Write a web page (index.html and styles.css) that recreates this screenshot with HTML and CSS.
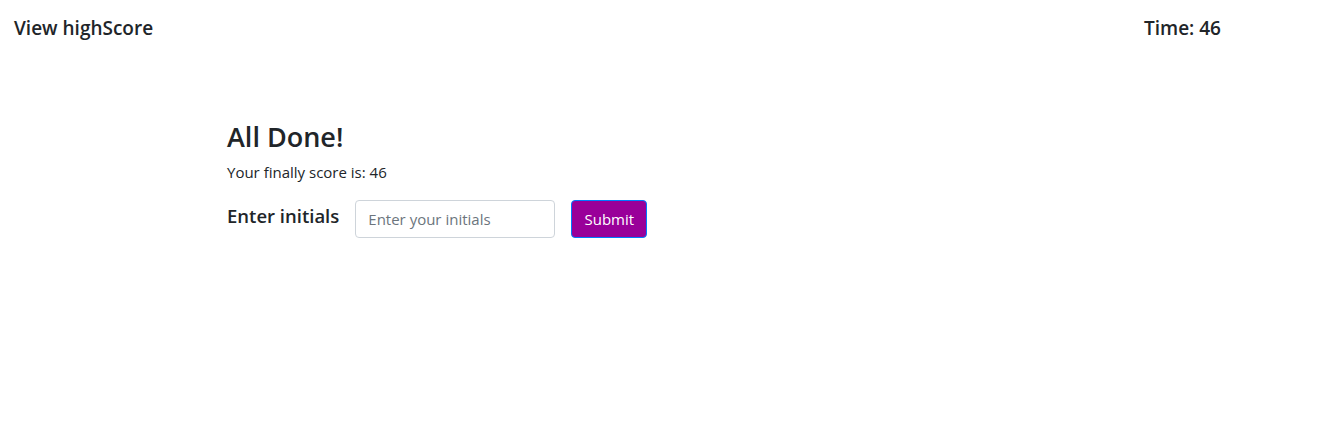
FILE: index.html
```html
<!DOCTYPE html>
<html lang="en">
<head>
<meta charset="utf-8">
<title>Quiz</title>
<link rel="stylesheet" href="styles.css">
</head>
<body>
  <header class="topbar">
    <h5 class="topbar-link">View highScore</h5>
    <h5 class="topbar-time">Time: 46</h5>
  </header>
  <main class="done">
    <h3 class="done-title">All Done!</h3>
    <p class="done-score">Your finally score is: 46</p>
    <form class="done-form">
      <h5 class="done-label">Enter initials</h5>
      <input class="done-input" type="text" placeholder="Enter your initials">
      <button class="done-btn" type="button">Submit</button>
    </form>
  </main>
</body>
</html>
```
FILE: styles.css
```css
html, body {
  margin: 0;
  padding: 0;
  background: #fff;
}
body {
  font-family: "Open Sans", "Noto Sans", sans-serif;
  color: #212529;
  font-size: 16px;
  line-height: 1.5;
}
h3, h5, p { margin: 0; }

.topbar {
  display: flex;
  justify-content: space-between;
  padding: 16px 0 0 14px;
  height: 40px;
}
.topbar h5 {
  font-size: 19px;
  font-weight: 600;
  line-height: 24px;
}
.topbar-time {
  width: 195px;
}

.done {
  padding: 64px 0 0 227px;
}
.done-title {
  font-size: 27px;
  font-weight: 600;
  line-height: 34px;
  margin-bottom: 6px;
}
.done-score {
  font-size: 15px;
  line-height: 24px;
  margin-bottom: 16px;
}
.done-form {
  display: flex;
  align-items: flex-start;
}
.done-label {
  font-size: 18.5px;
  font-weight: 600;
  line-height: 24px;
  margin-top: 4px;
  margin-right: 16px;
}
.done-input {
  box-sizing: border-box;
  width: 200px;
  height: 38px;
  padding: 6px 12px;
  font-family: inherit;
  font-size: 15px;
  color: #495057;
  border: 1px solid #ced4da;
  border-radius: 4px;
  margin-right: 16px;
}
.done-input::placeholder {
  color: #6c757d;
}
.done-btn {
  box-sizing: border-box;
  width: 76px;
  height: 38px;
  font-family: inherit;
  font-size: 15px;
  color: #fff;
  background: #990099;
  border: 1px solid #007bff;
  border-radius: 4px;
  padding: 0;
}
```
